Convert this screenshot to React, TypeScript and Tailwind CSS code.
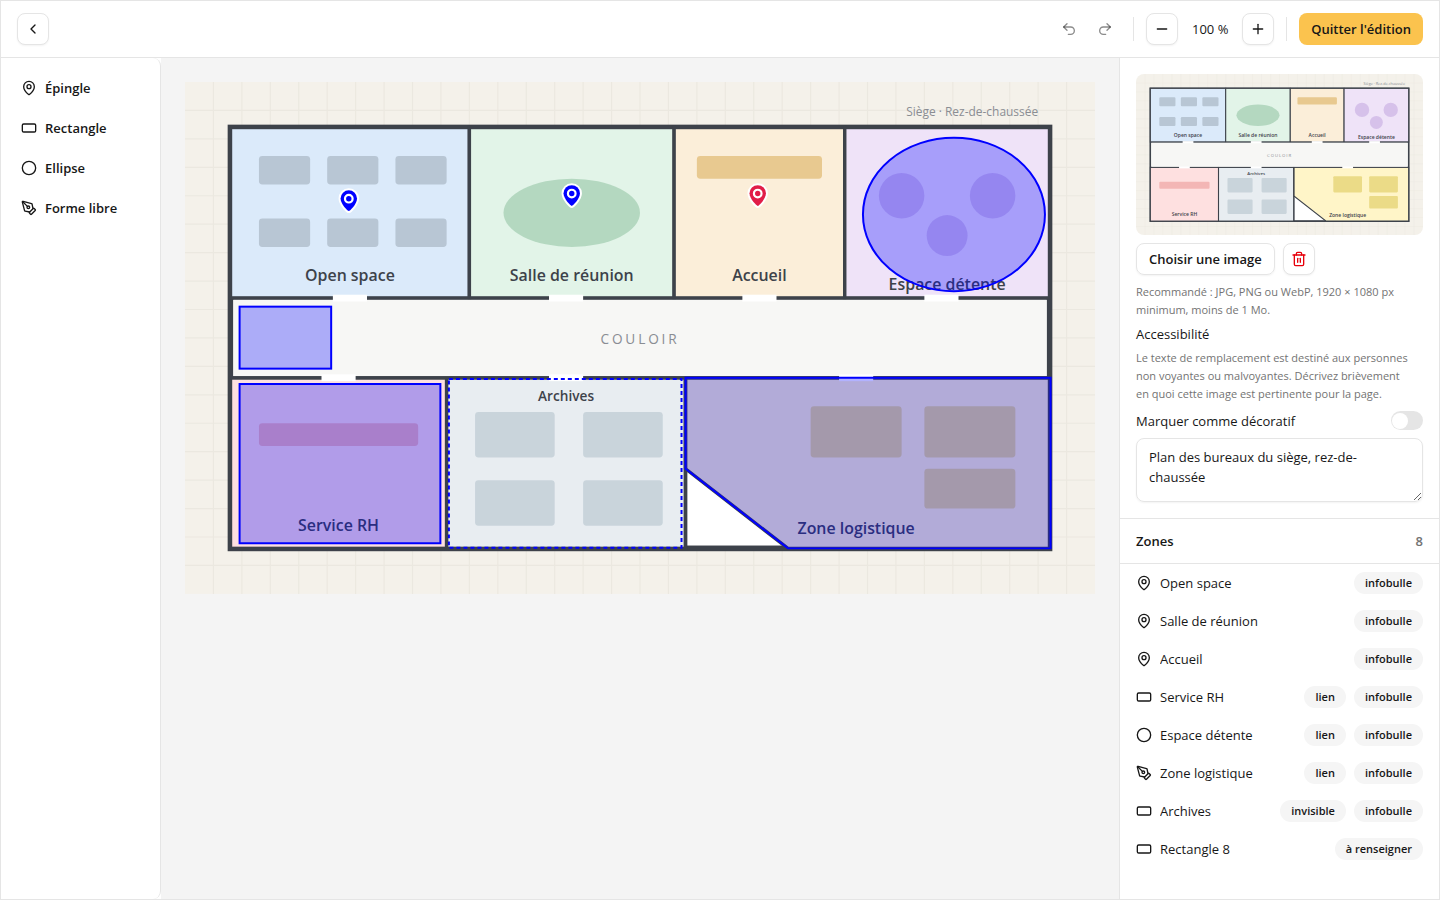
import { useState } from 'react'
import type { ComponentType, ReactNode } from 'react'
import {
  ChevronLeft,
  Circle,
  MapPin,
  Minus,
  PenTool,
  Plus,
  RectangleHorizontal,
  Redo2,
  Trash2,
  Undo2,
} from 'lucide-react'

type Shape = 'pin' | 'rect' | 'ellipse' | 'path'

interface Zone {
  name: string
  shape: Shape
  tags: string[]
}

const icons: Record<Shape, ComponentType<{ className?: string }>> = {
  pin: MapPin,
  rect: RectangleHorizontal,
  ellipse: Circle,
  path: PenTool,
}

const tools: { label: string; shape: Shape }[] = [
  { label: 'Épingle', shape: 'pin' },
  { label: 'Rectangle', shape: 'rect' },
  { label: 'Ellipse', shape: 'ellipse' },
  { label: 'Forme libre', shape: 'path' },
]

const zones: Zone[] = [
  { name: 'Open space', shape: 'pin', tags: ['infobulle'] },
  { name: 'Salle de réunion', shape: 'pin', tags: ['infobulle'] },
  { name: 'Accueil', shape: 'pin', tags: ['infobulle'] },
  { name: 'Service RH', shape: 'rect', tags: ['lien', 'infobulle'] },
  { name: 'Espace détente', shape: 'ellipse', tags: ['lien', 'infobulle'] },
  { name: 'Zone logistique', shape: 'path', tags: ['lien', 'infobulle'] },
  { name: 'Archives', shape: 'rect', tags: ['invisible', 'infobulle'] },
  { name: 'Rectangle 8', shape: 'rect', tags: ['à renseigner'] },
]

const rooms = [
  { x: 80, y: 80, w: 420, h: 300, fill: '#dbeafa' },
  { x: 500, y: 80, w: 360, h: 300, fill: '#e2f4e8' },
  { x: 860, y: 80, w: 300, h: 300, fill: '#fbeed9' },
  { x: 1160, y: 80, w: 360, h: 300, fill: '#efe3f8' },
  { x: 80, y: 520, w: 380, h: 300, fill: '#fee0e0' },
  { x: 460, y: 520, w: 420, h: 300, fill: '#e8edf1' },
]

const furniture = [
  ...[130, 240].flatMap((y) => [130, 250, 370].map((x) => ({ x, y, w: 90, h: 50, fill: '#b8c6d4' }))),
  { x: 900, y: 130, w: 220, h: 40, fill: '#e8c990' },
  { x: 130, y: 600, w: 280, h: 40, fill: '#f3b6b5' },
  ...[580, 700].flatMap((y) => [510, 700].map((x) => ({ x, y, w: 140, h: 80, fill: '#c9d4db' }))),
  { x: 1100, y: 570, w: 160, h: 90, fill: '#ebdb87' },
  { x: 1300, y: 570, w: 160, h: 90, fill: '#ebdb87' },
  { x: 1300, y: 680, w: 160, h: 70, fill: '#ebdb87' },
]

const doors = [
  [260, 374], [640, 374], [980, 374], [1300, 374],
  [240, 514], [640, 514], [1150, 514],
]

const labels = [
  { x: 290, y: 350, text: 'Open space' },
  { x: 680, y: 350, text: 'Salle de réunion' },
  { x: 1010, y: 350, text: 'Accueil' },
  { x: 1340, y: 365, text: 'Espace détente' },
  { x: 270, y: 790, text: 'Service RH' },
  { x: 1180, y: 795, text: 'Zone logistique' },
]

const gridX = Array.from({ length: 31 }, (_, i) => (i + 1) * 50)
const gridY = Array.from({ length: 17 }, (_, i) => (i + 1) * 50)

function FloorPlan({ className, children }: { className?: string; children?: ReactNode }) {
  return (
    <svg viewBox="0 0 1600 900" className={className} role="img" aria-label="Plan des bureaux du siège">
      <rect width="1600" height="900" fill="#f4f1ea" />
      <g stroke="#ebe8e0" strokeWidth="2">
        {gridX.map((x) => <line key={x} x1={x} x2={x} y1="0" y2="900" />)}
        {gridY.map((y) => <line key={y} x1="0" x2="1600" y1={y} y2={y} />)}
      </g>
      <rect x="80" y="80" width="1440" height="740" fill="#fff" stroke="#3d424a" strokeWidth="10" />
      <g stroke="#3d424a" strokeWidth="6">
        {rooms.map((r) => (
          <rect key={`${r.x}-${r.y}`} x={r.x} y={r.y} width={r.w} height={r.h} fill={r.fill} />
        ))}
        <path d="M880 520H1520V820H1060L880 680Z" fill="#fff5c8" />
        <path d="M80 380H1520M80 520H1520M880 520V820" fill="none" />
      </g>
      <rect x="85" y="383" width="1430" height="134" fill="#f7f7f5" />
      {doors.map(([x, y]) => <rect key={`${x}-${y}`} x={x} y={y} width="60" height="12" fill="#fff" />)}
      {furniture.map((f) => (
        <rect key={`${f.x}-${f.y}`} x={f.x} y={f.y} width={f.w} height={f.h} rx="6" fill={f.fill} />
      ))}
      <ellipse cx="680" cy="230" rx="120" ry="60" fill="#b4d8c0" />
      <g fill="#d6c1ea">
        <circle cx="1260" cy="200" r="40" />
        <circle cx="1420" cy="200" r="40" />
        <circle cx="1340" cy="270" r="36" />
      </g>
      <g fill="#3d424a" textAnchor="middle" className="text-[28px] font-semibold">
        {labels.map((l) => <text key={l.text} x={l.x} y={l.y}>{l.text}</text>)}
        <text x="670" y="561" className="text-[24px]">Archives</text>
      </g>
      <g fill="#8a8d93">
        <text x="800" y="460" textAnchor="middle" className="text-[24px] tracking-[5px]">COULOIR</text>
        <text x="1500" y="60" textAnchor="end" className="text-[21px]">Siège · Rez-de-chaussée</text>
      </g>
      {children}
    </svg>
  )
}

// x, y is the tip of the pin in plan units
function Pin({ x, y, color }: { x: number; y: number; color: string }) {
  return (
    <g transform={`translate(${x} ${y}) scale(1.76)`}>
      <path
        d="M0 0C-1 0 -8.2 -7 -8.2 -12.6A8.2 8.2 0 0 1 8.2 -12.6C8.2 -7 1 0 0 0Z"
        fill={color}
        stroke="#fff"
        strokeWidth="4"
        strokeLinejoin="round"
        paintOrder="stroke"
      />
      <circle cy="-12.4" r="3.8" fill={color} stroke="#fff" strokeWidth="2.2" />
    </g>
  )
}

function ZoneShapes() {
  return (
    <>
      <g fill="#0000ff" fillOpacity="0.3" stroke="#0000ff" strokeWidth="3.5">
        <rect x="96" y="395" width="161" height="109" />
        <rect x="96" y="531" width="353" height="280" />
        <ellipse cx="1352" cy="233" rx="160" ry="135" />
        <path d="M880 520H1522V820H1060L880 680Z" />
        <rect x="464" y="522" width="409" height="297" fill="none" strokeDasharray="7 5.3" />
      </g>
      <Pin x={288} y={227} color="#0000ff" />
      <Pin x={680} y={218} color="#0000ff" />
      <Pin x={1007} y={218} color="#e11d48" />
    </>
  )
}

function IconButton({ label, onClick, children }: { label: string; onClick?: () => void; children: ReactNode }) {
  return (
    <button
      type="button"
      aria-label={label}
      onClick={onClick}
      className="flex size-8 items-center justify-center rounded-lg border border-neutral-200 bg-white shadow-xs hover:bg-neutral-50"
    >
      {children}
    </button>
  )
}

export default function App() {
  const [zoom, setZoom] = useState(100)
  const [decorative, setDecorative] = useState(false)
  const [alt, setAlt] = useState('Plan des bureaux du siège, rez-de-chaussée')

  return (
    <div className="flex min-h-screen flex-col border border-neutral-200 bg-white font-['Open_Sans',sans-serif] text-[13px] leading-5 text-neutral-900">
      <header className="flex h-[57px] shrink-0 items-center justify-between border-b border-neutral-200 px-4">
        <IconButton label="Retour">
          <ChevronLeft className="size-4" />
        </IconButton>
        <div className="flex items-center gap-3">
          <div className="flex gap-1 text-neutral-900/50">
            <button type="button" aria-label="Annuler" className="flex size-8 items-center justify-center">
              <Undo2 className="size-4" />
            </button>
            <button type="button" aria-label="Rétablir" className="flex size-8 items-center justify-center">
              <Redo2 className="size-4" />
            </button>
          </div>
          <div className="h-6 w-px bg-neutral-200" />
          <IconButton label="Zoom arrière" onClick={() => setZoom(Math.max(10, zoom - 10))}>
            <Minus className="size-4" />
          </IconButton>
          <span className="w-10 text-center whitespace-nowrap">{zoom} %</span>
          <IconButton label="Zoom avant" onClick={() => setZoom(zoom + 10)}>
            <Plus className="size-4" />
          </IconButton>
          <div className="h-6 w-px bg-neutral-200" />
          <button type="button" className="h-8 rounded-lg bg-[#fbc34e] px-3 font-semibold whitespace-nowrap">
            Quitter l'édition
          </button>
        </div>
      </header>

      <div className="flex grow">
        <aside className="flex w-40 shrink-0 flex-col gap-1 rounded-r-lg border-r border-neutral-200 p-3">
          {tools.map(({ label, shape }) => {
            const Icon = icons[shape]
            return (
              <button key={label} type="button" className="flex h-9 items-center gap-2 rounded-lg px-2 font-semibold hover:bg-neutral-100">
                <Icon className="size-4" />
                {label}
              </button>
            )
          })}
        </aside>

        <main className="min-w-0 grow bg-[#f4f4f4] p-6">
          <FloorPlan className="block w-full">
            <ZoneShapes />
          </FloorPlan>
        </main>

        <aside className="w-80 shrink-0 border-l border-neutral-200">
          <div className="flex flex-col gap-2 border-b border-neutral-200 p-4">
            <FloorPlan className="block w-full rounded-lg" />
            <div className="flex gap-2">
              <button type="button" className="h-8 rounded-lg border border-neutral-200 px-3 font-semibold shadow-xs hover:bg-neutral-50">
                Choisir une image
              </button>
              <IconButton label="Supprimer l'image">
                <Trash2 className="size-4 text-[#e7000b]" />
              </IconButton>
            </div>
            <p className="pr-2 text-[11px] leading-[18px] text-neutral-500">
              Recommandé : JPG, PNG ou WebP, 1920 × 1080 px minimum, moins de 1 Mo.
            </p>
            <label htmlFor="alt" className="leading-[14px]">Accessibilité</label>
            <p className="pr-2 text-[11px] leading-[18px] text-neutral-500">
              Le texte de remplacement est destiné aux personnes non voyantes ou malvoyantes. Décrivez brièvement en quoi cette image est pertinente pour la page.
            </p>
            <div className="flex h-[19px] items-center justify-between">
              <label htmlFor="decorative">Marquer comme décoratif</label>
              <input
                id="decorative"
                type="checkbox"
                role="switch"
                checked={decorative}
                onChange={(e) => setDecorative(e.target.checked)}
                className="flex h-[19px] w-8 appearance-none items-center rounded-full bg-neutral-200 px-px before:size-4 before:rounded-full before:bg-white checked:justify-end checked:bg-neutral-900"
              />
            </div>
            <textarea
              id="alt"
              value={alt}
              onChange={(e) => setAlt(e.target.value)}
              className="block h-16 w-full rounded-lg border border-neutral-200 px-3 py-2 shadow-xs"
            />
          </div>

          <div className="flex h-[45px] items-center justify-between border-b border-neutral-200 px-4 font-semibold">
            <h2>Zones</h2>
            <span className="text-neutral-500">{zones.length}</span>
          </div>
          <ul>
            {zones.map((zone) => {
              const Icon = icons[zone.shape]
              return (
                <li key={zone.name}>
                  <button type="button" className="flex h-[38px] w-full items-center gap-2 px-4 text-left hover:bg-neutral-50">
                    <Icon className="size-4 shrink-0" />
                    <span className="grow truncate">{zone.name}</span>
                    {zone.tags.map((tag) => (
                      <span key={tag} className="flex h-[22px] items-center rounded-full bg-neutral-100 px-[11px] text-[11px] font-semibold">
                        {tag}
                      </span>
                    ))}
                  </button>
                </li>
              )
            })}
          </ul>
        </aside>
      </div>
    </div>
  )
}
